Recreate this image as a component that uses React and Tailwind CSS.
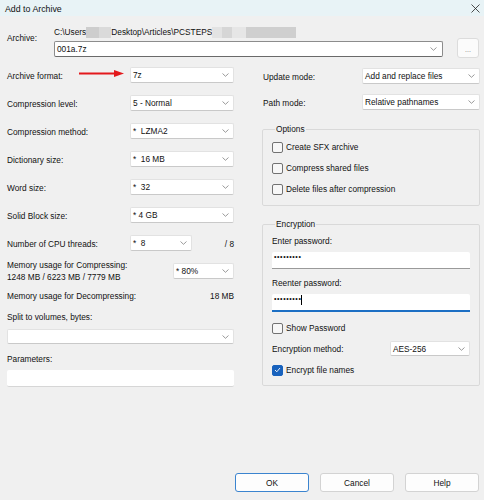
import React from "react";

const Chevron = () => (
  <svg width="7" height="4" viewBox="0 0 7 4" className="shrink-0">
    <path d="M0.5 0.5 L3.5 3.3 L6.5 0.5" fill="none" stroke="#808080" strokeWidth="0.8" />
  </svg>
);

function Combo({ value, className = "" }) {
  return (
    <div
      className={`flex items-center justify-between bg-white rounded-[2px] border border-[#e2e2e2] border-b-[#c9c9c9] pl-[2px] pr-[4px] ${className}`}
    >
      <span className="whitespace-pre leading-[12px]">{value}</span>
      <Chevron />
    </div>
  );
}

function Check({ label, checked }) {
  return (
    <div className="flex items-center gap-[3px] h-[12px]">
      <div
        className={`w-[11px] h-[11px] rounded-[2px] border flex items-center justify-center ${
          checked ? "bg-[#1862bd] border-[#1862bd]" : "bg-[#f7f7f7] border-[#727272]"
        }`}
      >
        {checked && (
          <svg width="7" height="6" viewBox="0 0 7 6">
            <path d="M1 3 L2.8 4.8 L6 1" fill="none" stroke="#ffffff" strokeWidth="0.9" />
          </svg>
        )}
      </div>
      <span className="leading-[12px]">{label}</span>
    </div>
  );
}

function Row({ label, value }) {
  return (
    <div className="flex items-center justify-between h-[16px]">
      <span className="leading-[12px] pt-[2px]">{label}</span>
      <Combo value={value} className="w-[104px] h-[16px]" />
    </div>
  );
}

export default function App() {
  return (
    <div
      className="relative w-[484px] h-[500px] bg-[#f0f0f0] flex flex-col text-[8.3px] text-[#111] overflow-hidden"
      style={{ fontFamily: "'Liberation Sans', Arial, sans-serif" }}
    >
      {/* title bar */}
      <div className="h-[16px] bg-[#e8f3f6] flex items-center justify-between pl-[5px] pr-[4px] shrink-0">
        <span className="text-[8.8px] leading-[12px] pt-[1px]">Add to Archive</span>
        <svg width="9" height="9" viewBox="0 0 9 9">
          <path d="M0.5 0.5 L8.5 8.5 M8.5 0.5 L0.5 8.5" stroke="#222" strokeWidth="0.8" />
        </svg>
      </div>

      <div className="flex-1 flex flex-col pl-[7px] pr-[4px]">
        {/* archive row */}
        <div className="flex pt-[11px]">
          <span className="w-[47px] leading-[12px] pt-[5px] shrink-0">Archive:</span>
          <div className="w-[389px] flex flex-col shrink-0">
            <div className="h-[10px] flex items-center leading-[10px] whitespace-pre">
              <span>C:\Users</span>
              <span className="w-[13px] h-[11px] bg-[#cdcdcd]" />
              <span className="w-[12px] h-[11px] bg-[#dadada]" />
              <span>Desktop\Articles\PCSTEPS</span>
              <span className="w-[10px] h-[11px] bg-[#e3e3e3]" />
              <span className="w-[10px] h-[11px] bg-[#d6d6d6]" />
              <span className="w-[14px] h-[11px] bg-[#e6e6e6]" />
              <span className="w-[50px] h-[11px] bg-[#cfcfcf]" />
            </div>
            <div className="mt-[4px] h-[16px] bg-white rounded-[2px] border border-[#8c8c8c] border-b-[#6a6a6a] flex items-center justify-between pl-[2px] pr-[5px]">
              <span className="leading-[12px]">001a.7z</span>
              <Chevron />
            </div>
          </div>
          <div className="ml-[14px] mt-[11px] w-[22px] h-[20px] shrink-0 bg-[#fbfbfb] border border-[#dcdcdc] rounded-[3px] flex items-center justify-center text-[#777] text-[7px] leading-[8px] pt-[3px]">
            ...
          </div>
        </div>

        {/* two columns */}
        <div className="flex mt-[9px]">
          {/* left */}
          <div className="w-[227px] shrink-0 flex flex-col">
            <div className="flex flex-col gap-[12px]">
              <Row label="Archive format:" value="7z" />
              <Row label="Compression level:" value="5 - Normal" />
              <Row label="Compression method:" value="*  LZMA2" />
              <Row label="Dictionary size:" value="*  16 MB" />
              <Row label="Word size:" value="*  32" />
              <Row label="Solid Block size:" value="* 4 GB" />
              <div className="flex items-center h-[16px]">
                <span className="w-[123px] leading-[12px] pt-[2px]">Number of CPU threads:</span>
                <Combo value="*  8" className="w-[62px] h-[16px]" />
                <span className="ml-auto leading-[12px] pt-[2px]">/ 8</span>
              </div>
            </div>
            <div className="flex items-center justify-between mt-[8px]">
              <div className="flex flex-col">
                <span className="leading-[12px]">Memory usage for Compressing:</span>
                <span className="leading-[12px]">1248 MB / 6223 MB / 7779 MB</span>
              </div>
              <Combo value="* 80%" className="w-[61px] h-[16px]" />
            </div>
            <div className="flex justify-between mt-[7px] leading-[12px]">
              <span>Memory usage for Decompressing:</span>
              <span>18 MB</span>
            </div>
            <span className="mt-[9px] leading-[12px]">Split to volumes, bytes:</span>
            <Combo value="" className="mt-[6px] h-[15px]" />
            <span className="mt-[9px] leading-[12px]">Parameters:</span>
            <div className="mt-[5px] h-[17px] bg-white border-b border-[#d6d6d6] rounded-[2px]" />
          </div>

          {/* right */}
          <div className="ml-[28px] w-[218px] shrink-0 flex flex-col pt-[1px]">
            <div className="flex items-center justify-between h-[16px] pl-[1px]">
              <span className="leading-[12px] pt-[2px]">Update mode:</span>
              <Combo value="Add and replace files" className="w-[118px] h-[16px]" />
            </div>
            <div className="flex items-center justify-between h-[16px] mt-[10px] pl-[1px]">
              <span className="leading-[12px] pt-[2px]">Path mode:</span>
              <Combo value="Relative pathnames" className="w-[118px] h-[16px]" />
            </div>

            <fieldset className="mt-[13px] border border-[#d9d9d9] rounded-[2px] pl-[9px] pr-[9px] pb-[10px] pt-[6px] flex flex-col gap-[9px]">
              <legend className="ml-[3px] px-[1px] leading-[12px]">Options</legend>
              <Check label="Create SFX archive" />
              <Check label="Compress shared files" />
              <Check label="Delete files after compression" />
            </fieldset>

            <fieldset className="mt-[12px] border border-[#d9d9d9] rounded-[2px] pl-[9px] pr-[9px] pb-[9px] pt-[5px] flex flex-col">
              <legend className="ml-[3px] px-[1px] leading-[12px]">Encryption</legend>
              <span className="leading-[12px]">Enter password:</span>
              <div className="mt-[5px] h-[17px] bg-white border-b border-[#9a9a9a] rounded-t-[2px] pl-[2px] pt-[1px] text-[7px] leading-[7px] tracking-[0.6px]">
                •••••••••
              </div>
              <span className="mt-[8px] leading-[12px]">Reenter password:</span>
              <div className="mt-[5px] h-[18px] bg-white border-b-2 border-[#1c6fc4] rounded-t-[2px] pl-[2px] pt-[1px] flex items-start">
                <span className="text-[7px] leading-[7px] tracking-[0.6px]">•••••••••</span>
                <span className="w-[1px] h-[10px] bg-black" />
              </div>
              <div className="mt-[10px]">
                <Check label="Show Password" />
              </div>
              <div className="mt-[7px] flex items-center justify-between h-[15px]">
                <span className="leading-[12px] pt-[1px]">Encryption method:</span>
                <Combo value="AES-256" className="w-[80px] h-[15px]" />
              </div>
              <div className="mt-[8px]">
                <Check label="Encrypt file names" checked />
              </div>
            </fieldset>
          </div>
        </div>

        {/* buttons */}
        <div className="mt-auto mb-[8px] mr-[1px] flex justify-end gap-[11px]">
          <div className="w-[74px] h-[19px] bg-[#fdfdfd] border border-[#3b84cf] rounded-[3px] flex items-center justify-center leading-[12px]">
            OK
          </div>
          <div className="w-[74px] h-[19px] bg-[#fdfdfd] border border-[#d3d3d3] rounded-[3px] flex items-center justify-center leading-[12px]">
            Cancel
          </div>
          <div className="w-[74px] h-[19px] bg-[#fdfdfd] border border-[#d3d3d3] rounded-[3px] flex items-center justify-center leading-[12px]">
            Help
          </div>
        </div>
      </div>

      {/* red annotation arrow */}
      <svg className="absolute left-[78px] top-[69px]" width="48" height="9" viewBox="0 0 48 9">
        <path d="M1 4.5 L38 4.5" stroke="#e3191c" strokeWidth="1.8" />
        <path d="M36 1 L46 4.5 L36 8 Z" fill="#e3191c" />
      </svg>
    </div>
  );
}
